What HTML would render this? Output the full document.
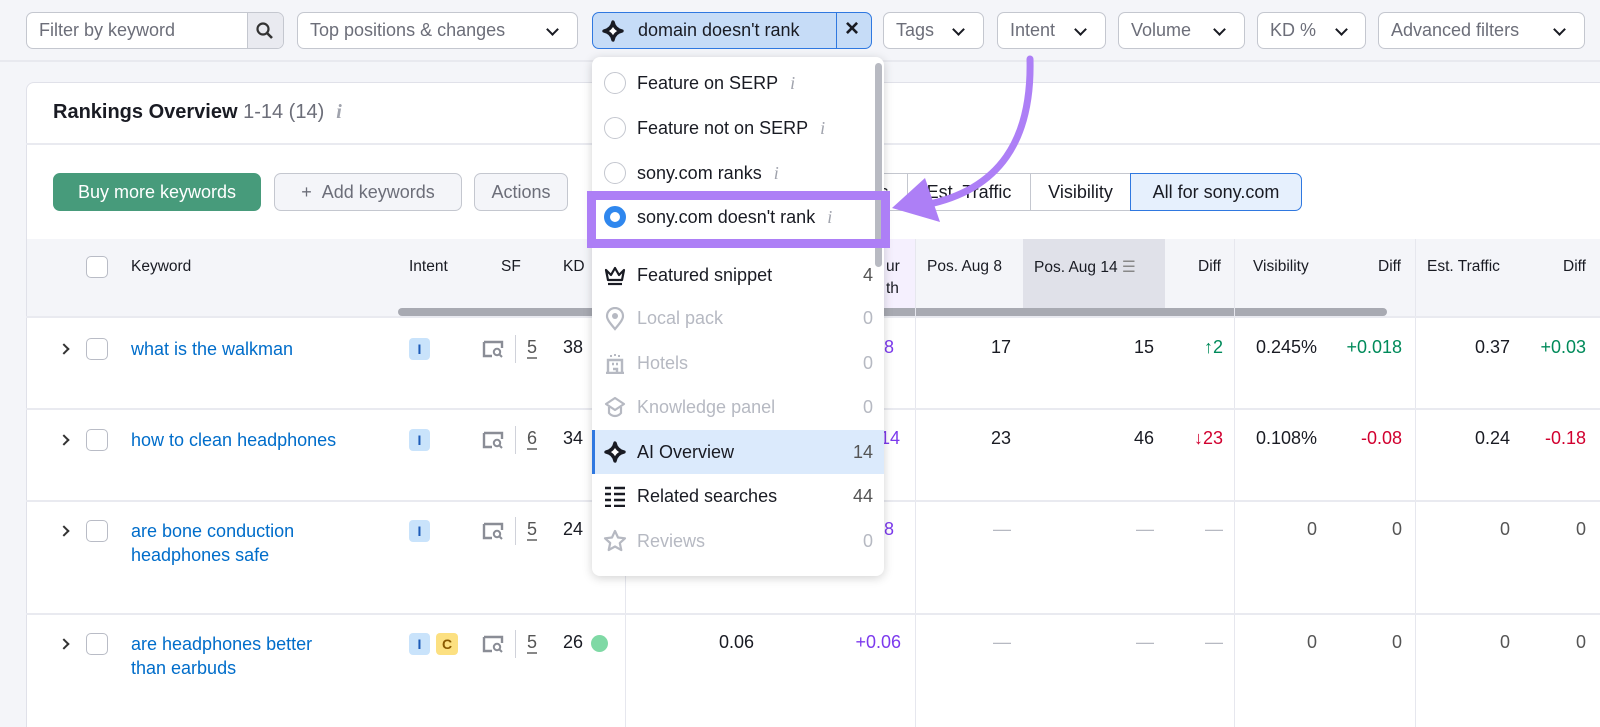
<!DOCTYPE html>
<html><head><meta charset="utf-8"><style>
*{box-sizing:border-box;margin:0;padding:0}
html,body{width:1600px;height:727px;overflow:hidden}
body{background:#f4f5f9;font-family:"Liberation Sans",Arial,sans-serif;color:#191b23;position:relative;font-size:18px}
.a{position:absolute;white-space:nowrap}
.inp{position:absolute;top:12px;height:37px;border:1px solid #c4c7cf;border-radius:7px;background:#fff;color:#6c6e79;font-size:18px;line-height:35px;padding-left:12px}
.chev{position:absolute;top:12px;width:9px;height:9px;border-right:2.5px solid #191b23;border-bottom:2.5px solid #191b23;transform:rotate(45deg)}
.card{position:absolute;left:26px;top:82px;width:1600px;height:645px;background:#fff;border:1px solid #e0e1e9;border-bottom:none;border-radius:8px 0 0 0}
.btn{position:absolute;top:173px;height:38px;border:1px solid #c4c7cf;border-radius:7px;background:#f4f5f9;color:#6c6e79;line-height:36px;font-size:18px;text-align:center}
.th{position:absolute;top:258px;font-size:15.5px;color:#191b23}
.vl{position:absolute;width:1px;background:#e6e7ee}
.hl{position:absolute;height:2px;background:#e9eaf0;left:26px;width:1574px}
.kw{position:absolute;color:#006dca;font-size:18px;line-height:24px}
.num{position:absolute;font-size:18px;text-align:right;white-space:nowrap}
.cb{position:absolute;left:86px;width:22px;height:22px;border:1.5px solid #b9bcc6;border-radius:5px;background:#fff}
.arr{position:absolute;left:60px;width:8px;height:8px;border-right:2.5px solid #333;border-top:2.5px solid #333;transform:rotate(45deg)}
.bI{position:absolute;left:409px;width:21px;height:22px;background:#c9e3fb;border-radius:4px;color:#1c5bb8;font-size:14px;font-weight:bold;text-align:center;line-height:22px}
.sf{position:absolute;left:482px;width:22px;height:18px}
.sep{position:absolute;left:515px;width:1px;height:28px;background:#d0d2da}
.sfn{position:absolute;left:527px;font-size:18px;color:#555;border-bottom:2px dashed #888;line-height:20px}
.dd{position:absolute;left:592px;top:57px;width:292px;height:519px;background:#fff;border-radius:8px;box-shadow:0 2px 10px rgba(0,0,0,.18)}
.it{position:absolute;left:637px;font-size:18px;line-height:22px}
.rd{position:absolute;left:604px;width:22px;height:22px;border:1.5px solid #c4c7cf;border-radius:50%;background:#fff}
.cnt{position:absolute;right:727px;font-size:18px;line-height:22px;color:#6c6e79;text-align:right}
.ii{font-family:"Liberation Serif",serif;font-style:italic;color:#a0a3ad;font-size:18px;margin-left:12px}
.g{color:#b6b9c2}
.grn{color:#008a5a}.red{color:#d1002f}.pur{color:#7c3aed}
</style></head><body>
<div style="position:absolute;left:0;top:60px;width:1600px;height:2px;background:#e8e9ef"></div>
<div class="inp" style="left:26px;width:258px">Filter by keyword</div>
<div style="position:absolute;left:247px;top:13px;width:36px;height:35px;background:#e9eaf0;border-left:1px solid #c4c7cf;border-radius:0 6px 6px 0"></div>
<svg class="a" style="left:255px;top:21px" width="20" height="20" viewBox="0 0 20 20"><circle cx="8" cy="8" r="5.5" fill="none" stroke="#333" stroke-width="2.2"/><path d="M12 12l5 5" stroke="#333" stroke-width="2.6"/></svg>
<div class="inp" style="left:297px;width:281px">Top positions &amp; changes<span class="chev" style="left:250px"></span></div>
<div class="inp" style="left:592px;width:280px;background:#c6dcf7;border-color:#2f78e0;color:#191b23;padding-left:45px">domain doesn't rank</div>
<div style="position:absolute;left:836px;top:13px;width:1px;height:35px;background:#2f78e0"></div>
<svg class="a" style="left:601px;top:19px" width="24" height="24" viewBox="0 0 24 24"><path d="M12 3C13 8 16 11 21 12C16 13 13 16 12 21C11 16 8 13 3 12C8 11 11 8 12 3Z" fill="#fff" stroke="#191b23" stroke-width="3.4" stroke-linejoin="round"/></svg>
<div class="a" style="left:845px;top:15px;font-size:24px;font-weight:bold">×</div>
<div class="inp" style="left:883px;width:101px">Tags<span class="chev" style="left:70px"></span></div>
<div class="inp" style="left:997px;width:109px">Intent<span class="chev" style="left:78px"></span></div>
<div class="inp" style="left:1118px;width:127px">Volume<span class="chev" style="left:96px"></span></div>
<div class="inp" style="left:1257px;width:109px">KD %<span class="chev" style="left:79px"></span></div>
<div class="inp" style="left:1378px;width:207px">Advanced filters<span class="chev" style="left:176px"></span></div>

<div class="card"></div>
<div class="a" style="left:53px;top:101px;font-size:20px;font-weight:bold">Rankings Overview <span style="font-weight:normal;color:#6c6e79">1-14 (14)</span><span class="ii" style="font-size:20px">i</span></div>
<div class="hl" style="top:143px"></div>
<div class="btn" style="left:53px;width:208px;background:#479b7b;border-color:#479b7b;color:#fff">Buy more keywords</div>
<div class="btn" style="left:274px;width:188px">+&nbsp;&nbsp;Add keywords</div>
<div class="btn" style="left:474px;width:94px">Actions</div>
<div class="btn" style="left:860px;width:48px;background:#fff;border-radius:0;color:#191b23">s</div>
<div class="btn" style="left:907px;width:124px;background:#fff;border-radius:0;color:#191b23">Est. Traffic</div>
<div class="btn" style="left:1030px;width:101px;background:#fff;border-radius:0;color:#191b23">Visibility</div>
<div class="btn" style="left:1130px;width:172px;background:#e6f0fd;border-color:#2f78e0;border-radius:0 7px 7px 0;color:#191b23">All for sony.com</div>

<div style="position:absolute;left:27px;top:239px;width:1573px;height:77px;background:#f4f5f9"></div>
<div style="position:absolute;left:1023px;top:239px;width:142px;height:77px;background:#e0e1e9"></div>
<div style="position:absolute;left:884px;top:239px;width:31px;height:77px;background:#f5f0fe"></div>
<div style="position:absolute;left:398px;top:308px;width:989px;height:8px;background:#a8aab2;border-radius:4px"></div>
<div class="cb" style="top:256px"></div>
<div class="th" style="left:131px">Keyword</div>
<div class="th" style="left:409px">Intent</div>
<div class="th" style="left:501px">SF</div>
<div class="th" style="left:563px">KD</div>
<div class="th" style="left:886px">ur</div><div class="th" style="left:886px;top:280px">th</div>
<div class="th" style="left:927px">Pos. Aug 8</div>
<div class="th" style="left:1034px">Pos. Aug 14 <span style="color:#888">☰</span></div>
<div class="th" style="left:1198px">Diff</div>
<div class="th" style="left:1253px">Visibility</div>
<div class="th" style="left:1378px">Diff</div>
<div class="th" style="left:1427px">Est. Traffic</div>
<div class="th" style="left:1563px">Diff</div>

<div class="vl" style="left:625px;top:316px;height:411px"></div>
<div class="vl" style="left:915px;top:239px;height:488px"></div>
<div class="vl" style="left:1234px;top:239px;height:488px"></div>
<div class="vl" style="left:1415px;top:239px;height:488px"></div>
<div class="hl" style="top:316px"></div>
<div class="hl" style="top:408px"></div>
<div class="hl" style="top:500px"></div>
<div class="hl" style="top:613px"></div>

<div class="arr" style="top:345px"></div><div class="cb" style="top:338px"></div>
<div class="kw" style="left:131px;top:337px">what is the walkman</div>
<div class="bI" style="top:338px">I</div>
<svg class="sf" style="top:340px" viewBox="0 0 22 18"><path d="M2 2h18v6M2 2v14h8" fill="none" stroke="#8a8d96" stroke-width="2.4"/><circle cx="15" cy="12" r="3.2" fill="none" stroke="#8a8d96" stroke-width="2"/><path d="M17 14l3 3" stroke="#8a8d96" stroke-width="2"/></svg>
<div class="sep" style="top:335px"></div><div class="sfn" style="top:337px">5</div>
<div class="num" style="left:563px;top:337px">38</div>
<div class="num pur" style="left:878px;top:337px">)8</div>
<div class="num" style="right:589px;top:337px">17</div>
<div class="num" style="right:446px;top:337px">15</div>
<div class="num grn" style="right:377px;top:337px">↑2</div>
<div class="num" style="right:283px;top:337px">0.245%</div>
<div class="num grn" style="right:198px;top:337px">+0.018</div>
<div class="num" style="right:90px;top:337px">0.37</div>
<div class="num grn" style="right:14px;top:337px">+0.03</div>

<div class="arr" style="top:436px"></div><div class="cb" style="top:429px"></div>
<div class="kw" style="left:131px;top:428px">how to clean headphones</div>
<div class="bI" style="top:429px">I</div>
<svg class="sf" style="top:431px" viewBox="0 0 22 18"><path d="M2 2h18v6M2 2v14h8" fill="none" stroke="#8a8d96" stroke-width="2.4"/><circle cx="15" cy="12" r="3.2" fill="none" stroke="#8a8d96" stroke-width="2"/><path d="M17 14l3 3" stroke="#8a8d96" stroke-width="2"/></svg>
<div class="sep" style="top:426px"></div><div class="sfn" style="top:428px">6</div>
<div class="num" style="left:563px;top:428px">34</div>
<div class="num pur" style="left:880px;top:428px">14</div>
<div class="num" style="right:589px;top:428px">23</div>
<div class="num" style="right:446px;top:428px">46</div>
<div class="num red" style="right:377px;top:428px">↓23</div>
<div class="num" style="right:283px;top:428px">0.108%</div>
<div class="num red" style="right:198px;top:428px">-0.08</div>
<div class="num" style="right:90px;top:428px">0.24</div>
<div class="num red" style="right:14px;top:428px">-0.18</div>

<div class="arr" style="top:527px"></div><div class="cb" style="top:520px"></div>
<div class="kw" style="left:131px;top:519px">are bone conduction<br>headphones safe</div>
<div class="bI" style="top:520px">I</div>
<svg class="sf" style="top:522px" viewBox="0 0 22 18"><path d="M2 2h18v6M2 2v14h8" fill="none" stroke="#8a8d96" stroke-width="2.4"/><circle cx="15" cy="12" r="3.2" fill="none" stroke="#8a8d96" stroke-width="2"/><path d="M17 14l3 3" stroke="#8a8d96" stroke-width="2"/></svg>
<div class="sep" style="top:517px"></div><div class="sfn" style="top:519px">5</div>
<div class="num" style="left:563px;top:519px">24</div>
<div class="num pur" style="left:878px;top:519px">)8</div>
<div class="num g" style="right:589px;top:519px">—</div>
<div class="num g" style="right:446px;top:519px">—</div>
<div class="num g" style="right:377px;top:519px">—</div>
<div class="num" style="right:283px;top:519px;color:#555">0</div>
<div class="num" style="right:198px;top:519px;color:#555">0</div>
<div class="num" style="right:90px;top:519px;color:#555">0</div>
<div class="num" style="right:14px;top:519px;color:#555">0</div>

<div class="arr" style="top:640px"></div><div class="cb" style="top:633px"></div>
<div class="kw" style="left:131px;top:632px">are headphones better<br>than earbuds</div>
<div class="bI" style="top:633px">I</div>
<div class="bI" style="top:633px;left:436px;width:22px;background:#fce081;color:#8a5a00;font-weight:bold">C</div>
<svg class="sf" style="top:635px" viewBox="0 0 22 18"><path d="M2 2h18v6M2 2v14h8" fill="none" stroke="#8a8d96" stroke-width="2.4"/><circle cx="15" cy="12" r="3.2" fill="none" stroke="#8a8d96" stroke-width="2"/><path d="M17 14l3 3" stroke="#8a8d96" stroke-width="2"/></svg>
<div class="sep" style="top:630px"></div><div class="sfn" style="top:632px">5</div>
<div class="num" style="left:563px;top:632px">26</div>
<div style="position:absolute;left:591px;top:635px;width:17px;height:17px;border-radius:50%;background:#7fd9a5"></div>
<div class="num" style="right:846px;top:632px">0.06</div>
<div class="num pur" style="right:699px;top:632px">+0.06</div>
<div class="num g" style="right:589px;top:632px">—</div>
<div class="num g" style="right:446px;top:632px">—</div>
<div class="num g" style="right:377px;top:632px">—</div>
<div class="num" style="right:283px;top:632px;color:#555">0</div>
<div class="num" style="right:198px;top:632px;color:#555">0</div>
<div class="num" style="right:90px;top:632px;color:#555">0</div>
<div class="num" style="right:14px;top:632px;color:#555">0</div>

<div class="dd"></div>
<div style="position:absolute;left:875px;top:63px;width:7px;height:204px;background:#b8bac2;border-radius:4px"></div>
<div class="rd" style="top:72px"></div><div class="it" style="top:72px">Feature on SERP<span class="ii">i</span></div>
<div class="rd" style="top:117px"></div><div class="it" style="top:117px">Feature not on SERP<span class="ii">i</span></div>
<div class="rd" style="top:162px"></div><div class="it" style="top:162px">sony.com ranks<span class="ii">i</span></div>
<div class="rd" style="top:206px;border:6px solid #2f87ee"></div><div class="it" style="top:206px">sony.com doesn't rank<span class="ii">i</span></div>
<div style="position:absolute;left:587px;top:191px;width:303px;height:57px;border:9px solid #ad7ff6"></div>
<svg class="a" style="left:603px;top:264px" width="24" height="24" viewBox="0 0 24 24"><path d="M3 6l5 5 4-7 4 7 5-5-2 10H5z" fill="none" stroke="#191b23" stroke-width="2.2" stroke-linejoin="round"/><path d="M5 20h14" stroke="#191b23" stroke-width="2.2"/></svg>
<div class="it" style="top:264px">Featured snippet</div><div class="cnt" style="top:264px;color:#555">4</div>
<svg class="a" style="left:604px;top:307px" width="22" height="24" viewBox="0 0 22 24"><path d="M11 22C5 15 3 12 3 9a8 8 0 0116 0c0 3-2 6-8 13z" fill="none" stroke="#b6b9c2" stroke-width="2.2"/><circle cx="11" cy="9" r="3" fill="#b6b9c2"/></svg>
<div class="it g" style="top:307px">Local pack</div><div class="cnt g" style="top:307px">0</div>
<svg class="a" style="left:604px;top:352px" width="22" height="22" viewBox="0 0 22 22"><path d="M4 21V8h14v13M2 21h18" fill="none" stroke="#b6b9c2" stroke-width="2.4"/><path d="M8 12h2M12 12h2M9 17h4v4" stroke="#b6b9c2" stroke-width="2.4" fill="none"/><path d="M7 3v2M11 2v2M15 3v2" stroke="#b6b9c2" stroke-width="2"/></svg>
<div class="it g" style="top:352px">Hotels</div><div class="cnt g" style="top:352px">0</div>
<svg class="a" style="left:604px;top:396px" width="22" height="22" viewBox="0 0 22 22"><path d="M11 2L2 8l9 6 9-6z" fill="none" stroke="#b6b9c2" stroke-width="2.2" stroke-linejoin="round"/><path d="M5 11v6c3 4 9 4 12 0v-6" fill="none" stroke="#b6b9c2" stroke-width="2.2"/></svg>
<div class="it g" style="top:396px">Knowledge panel</div><div class="cnt g" style="top:396px">0</div>
<div style="position:absolute;left:592px;top:430px;width:292px;height:44px;background:#dbeafc;border-left:3px solid #2f78e0"></div>
<svg class="a" style="left:603px;top:440px" width="24" height="24" viewBox="0 0 24 24"><path d="M12 3C13 8 16 11 21 12C16 13 13 16 12 21C11 16 8 13 3 12C8 11 11 8 12 3Z" fill="#fff" stroke="#191b23" stroke-width="3.4" stroke-linejoin="round"/></svg>
<div class="it" style="top:441px">AI Overview</div><div class="cnt" style="top:441px;color:#555">14</div>
<svg class="a" style="left:604px;top:485px" width="22" height="22" viewBox="0 0 22 22"><path d="M1 3h6M1 9h6M1 15h6M1 21h6M10 3h11M10 9h11M10 15h11M10 21h11" stroke="#191b23" stroke-width="2.6"/></svg>
<div class="it" style="top:485px">Related searches</div><div class="cnt" style="top:485px;color:#555">44</div>
<svg class="a" style="left:603px;top:529px" width="24" height="24" viewBox="0 0 24 24"><path d="M12 2l3 6.5 7 .8-5.2 4.8 1.5 7L12 17.5 5.7 21l1.5-7L2 9.3l7-.8z" fill="none" stroke="#b6b9c2" stroke-width="2.2" stroke-linejoin="round"/></svg>
<div class="it g" style="top:530px">Reviews</div><div class="cnt g" style="top:530px">0</div>

<svg class="a" style="left:0;top:0" width="1600" height="727" viewBox="0 0 1600 727">
<path d="M1030 59 C1032 140 1000 190 925 205" fill="none" stroke="#ad7ff6" stroke-width="7" stroke-linecap="round"/>
<path d="M892 208 L940 222 L925 178 Z" fill="#ad7ff6"/>
</svg>
</body></html>
